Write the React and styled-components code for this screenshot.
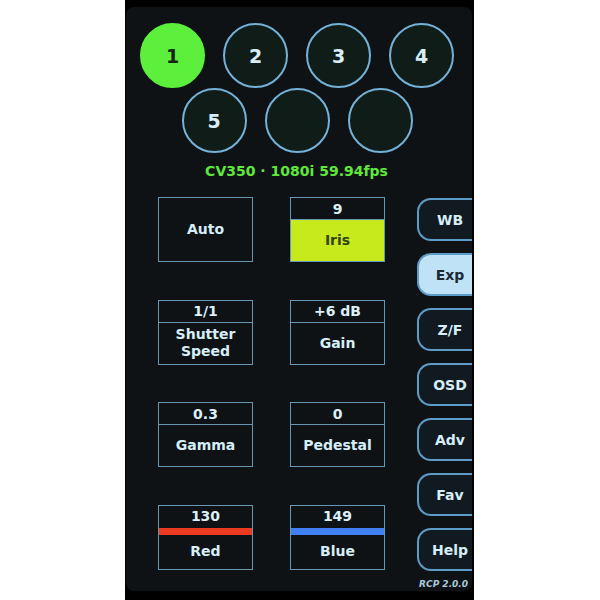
import React from 'react';
import styled, { createGlobalStyle } from 'styled-components';

const GlobalStyle = createGlobalStyle`
  html, body {
    margin: 0;
    padding: 0;
    background: #ffffff;
  }
  * {
    box-sizing: border-box;
  }
`;

const cameras = [
  { id: 1, label: '1', active: true },
  { id: 2, label: '2' },
  { id: 3, label: '3' },
  { id: 4, label: '4' },
  { id: 5, label: '5' },
  { id: 6, label: '' },
  { id: 7, label: '' },
];

const controls = [
  { name: 'Auto' },
  { name: 'Iris', value: '9', highlight: true },
  { name: 'Shutter Speed', value: '1/1' },
  { name: 'Gain', value: '+6 dB' },
  { name: 'Gamma', value: '0.3' },
  { name: 'Pedestal', value: '0' },
  { name: 'Red', value: '130', bar: '#ea3a1f' },
  { name: 'Blue', value: '149', bar: '#4080f2' },
];

const tabs = ['WB', 'Exp', 'Z/F', 'OSD', 'Adv', 'Fav', 'Help'];

export default function App() {
  return (
    <Page>
      <GlobalStyle />
      <Bezel>
        <Screen>
          <CameraGrid>
            {cameras.map((c) => (
              <CameraButton key={c.id} active={c.active}>
                {c.label}
              </CameraButton>
            ))}
          </CameraGrid>
          <Status>CV350 · 1080i 59.94fps</Status>
          <Main>
            <ControlGrid>
              {controls.map((c) => (
                <ControlBox key={c.name}>
                  {c.value !== undefined && (
                    <ValueBar barColor={c.bar}>{c.value}</ValueBar>
                  )}
                  <ControlLabel highlight={c.highlight}>{c.name}</ControlLabel>
                </ControlBox>
              ))}
            </ControlGrid>
            <TabColumn>
              {tabs.map((t) => (
                <Tab key={t} active={t === 'Exp'}>
                  {t}
                </Tab>
              ))}
              <Version>RCP 2.0.0</Version>
            </TabColumn>
          </Main>
        </Screen>
      </Bezel>
    </Page>
  );
}

const Page = styled.div`
  width: 600px;
  height: 600px;
  display: flex;
  justify-content: center;
  font-family: 'DejaVu Sans', 'Liberation Sans', sans-serif;
`;

const Bezel = styled.div`
  width: 349px;
  height: 600px;
  margin-left: -1px;
  background: #000;
  padding: 7px 2px 9px 1px;
`;

const Screen = styled.div`
  height: 100%;
  background: #0e1215;
  border-radius: 8px;
  overflow: hidden;
  padding-top: 16px;
`;

const CameraGrid = styled.div`
  width: 314px;
  margin-left: 14px;
  display: flex;
  flex-wrap: wrap;
  justify-content: center;
  column-gap: 18px;
`;

const CameraButton = styled.div`
  width: 65px;
  height: 65px;
  border-radius: 50%;
  display: flex;
  align-items: center;
  justify-content: center;
  font-size: 19px;
  font-weight: bold;
  color: ${(p) => (p.active ? '#13240e' : '#d6eef7')};
  background: ${(p) => (p.active ? '#5cf03d' : '#0f1c17')};
  border: 2px solid ${(p) => (p.active ? '#5cf03d' : '#74b2da')};
`;

const Status = styled.div`
  margin-top: 9px;
  margin-left: -5px;
  text-align: center;
  font-size: 14px;
  font-weight: bold;
  color: #5ee83c;
  line-height: 18px;
`;

const Main = styled.div`
  display: flex;
  margin-top: 17px;
  padding-left: 32px;
`;

const ControlGrid = styled.div`
  display: grid;
  grid-template-columns: 95px 95px;
  grid-auto-rows: 65px;
  column-gap: 37px;
  row-gap: 37.5px;
  align-content: start;
`;

const ControlBox = styled.div`
  border: 1.5px solid #6698b6;
  display: flex;
  flex-direction: column;
`;

const ValueBar = styled.div`
  height: ${(p) => (p.barColor ? '29px' : '22px')};
  flex: none;
  display: flex;
  align-items: ${(p) => (p.barColor ? 'flex-start' : 'center')};
  padding-top: ${(p) => (p.barColor ? '2px' : '0')};
  justify-content: center;
  font-size: 14px;
  font-weight: bold;
  color: #dcf0f8;
  border-bottom: ${(p) => (p.barColor ? `7px solid ${p.barColor}` : '1.5px solid #6698b6')};
`;

const ControlLabel = styled.div`
  flex: 1;
  display: flex;
  align-items: center;
  justify-content: center;
  text-align: center;
  padding: 0 14px;
  font-size: 14px;
  font-weight: bold;
  line-height: 17px;
  color: ${(p) => (p.highlight ? '#34450f' : '#d6eef7')};
  background: ${(p) => (p.highlight ? '#c6ea1c' : 'transparent')};
`;

const TabColumn = styled.div`
  margin-left: 32px;
  display: flex;
  flex-direction: column;
  gap: 12px;
  padding-top: 1px;
`;

const Tab = styled.div`
  width: 64px;
  height: 43px;
  border: 2px solid #5d9cc6;
  border-right: none;
  border-radius: 14px 0 0 14px;
  display: flex;
  align-items: center;
  justify-content: center;
  font-size: 14px;
  font-weight: bold;
  color: ${(p) => (p.active ? '#1b2a33' : '#d6eef7')};
  background: ${(p) => (p.active ? '#bfe2f7' : '#121a21')};
`;

const Version = styled.div`
  margin-top: -4px;
  width: 55px;
  text-align: right;
  padding-right: 4px;
  font-size: 9px;
  font-weight: bold;
  font-style: italic;
  color: #a9c9dc;
`;
